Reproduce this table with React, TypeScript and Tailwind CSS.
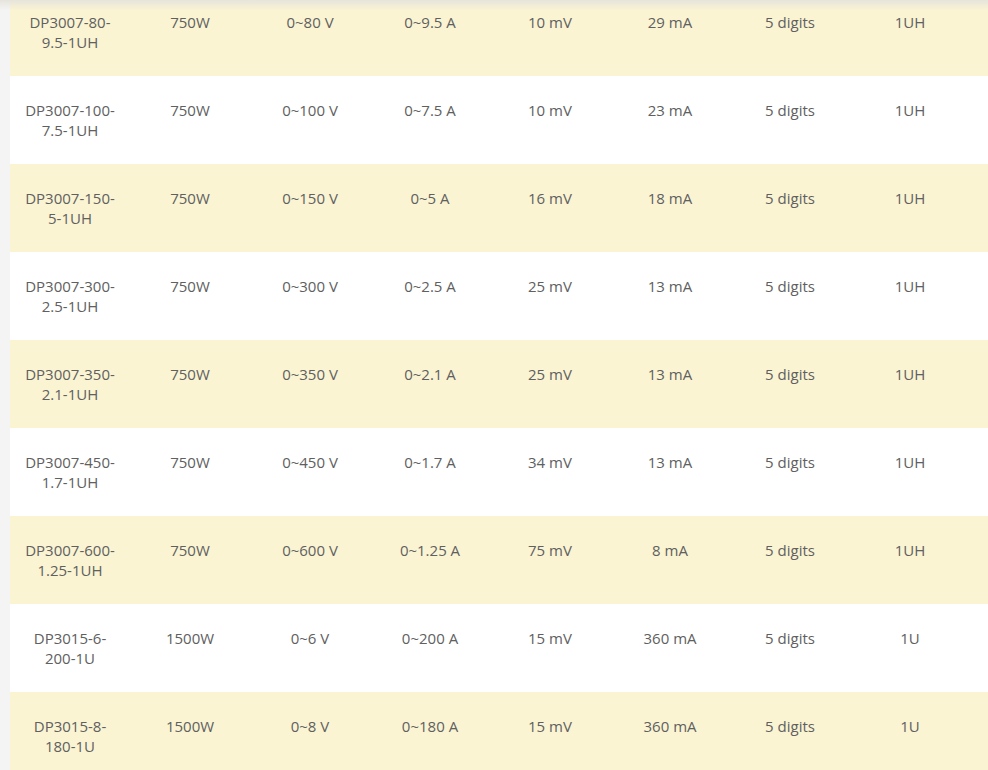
import React from "react";

const rows = [
  ["DP3007-80-9.5-1UH", "750W", "0~80 V", "0~9.5 A", "10 mV", "29 mA", "5 digits", "1UH"],
  ["DP3007-100-7.5-1UH", "750W", "0~100 V", "0~7.5 A", "10 mV", "23 mA", "5 digits", "1UH"],
  ["DP3007-150-5-1UH", "750W", "0~150 V", "0~5 A", "16 mV", "18 mA", "5 digits", "1UH"],
  ["DP3007-300-2.5-1UH", "750W", "0~300 V", "0~2.5 A", "25 mV", "13 mA", "5 digits", "1UH"],
  ["DP3007-350-2.1-1UH", "750W", "0~350 V", "0~2.1 A", "25 mV", "13 mA", "5 digits", "1UH"],
  ["DP3007-450-1.7-1UH", "750W", "0~450 V", "0~1.7 A", "34 mV", "13 mA", "5 digits", "1UH"],
  ["DP3007-600-1.25-1UH", "750W", "0~600 V", "0~1.25 A", "75 mV", "8 mA", "5 digits", "1UH"],
  ["DP3015-6-200-1U", "1500W", "0~6 V", "0~200 A", "15 mV", "360 mA", "5 digits", "1U"],
  ["DP3015-8-180-1U", "1500W", "0~8 V", "0~180 A", "15 mV", "360 mA", "5 digits", "1U"],
];

const App = () => {
  return (
    <div className="relative flex h-[770px] overflow-hidden bg-[#f4f4f4] font-['Open_Sans',sans-serif] text-[15px] leading-[20px] text-[#606060]">
      <div className="w-[10px] shrink-0" />
      <div className="mt-[-12px] flex shrink-0 flex-col">
        {rows.map((row, i) => (
          <div
            key={row[0]}
            className={`flex h-[88px] w-[1080px] shrink-0 ${i % 2 === 0 ? "bg-[#faf4d3]" : "bg-white"}`}
          >
            {row.map((cell, j) => (
              <div key={j} className="w-[120px] shrink-0 px-[10px] pt-[24px] text-center">
                {j === 0 ? (
                  <>
                    {cell.split("-").slice(0, 2).join("-")}-
                    <br />
                    {cell.split("-").slice(2).join("-")}
                  </>
                ) : (
                  cell
                )}
              </div>
            ))}
            <div className="w-[120px] shrink-0" />
          </div>
        ))}
      </div>
      <div className="pointer-events-none absolute left-0 right-0 top-0 h-[10px] bg-gradient-to-b from-[#e6e4dc] to-transparent" />
    </div>
  );
};

export default App;
